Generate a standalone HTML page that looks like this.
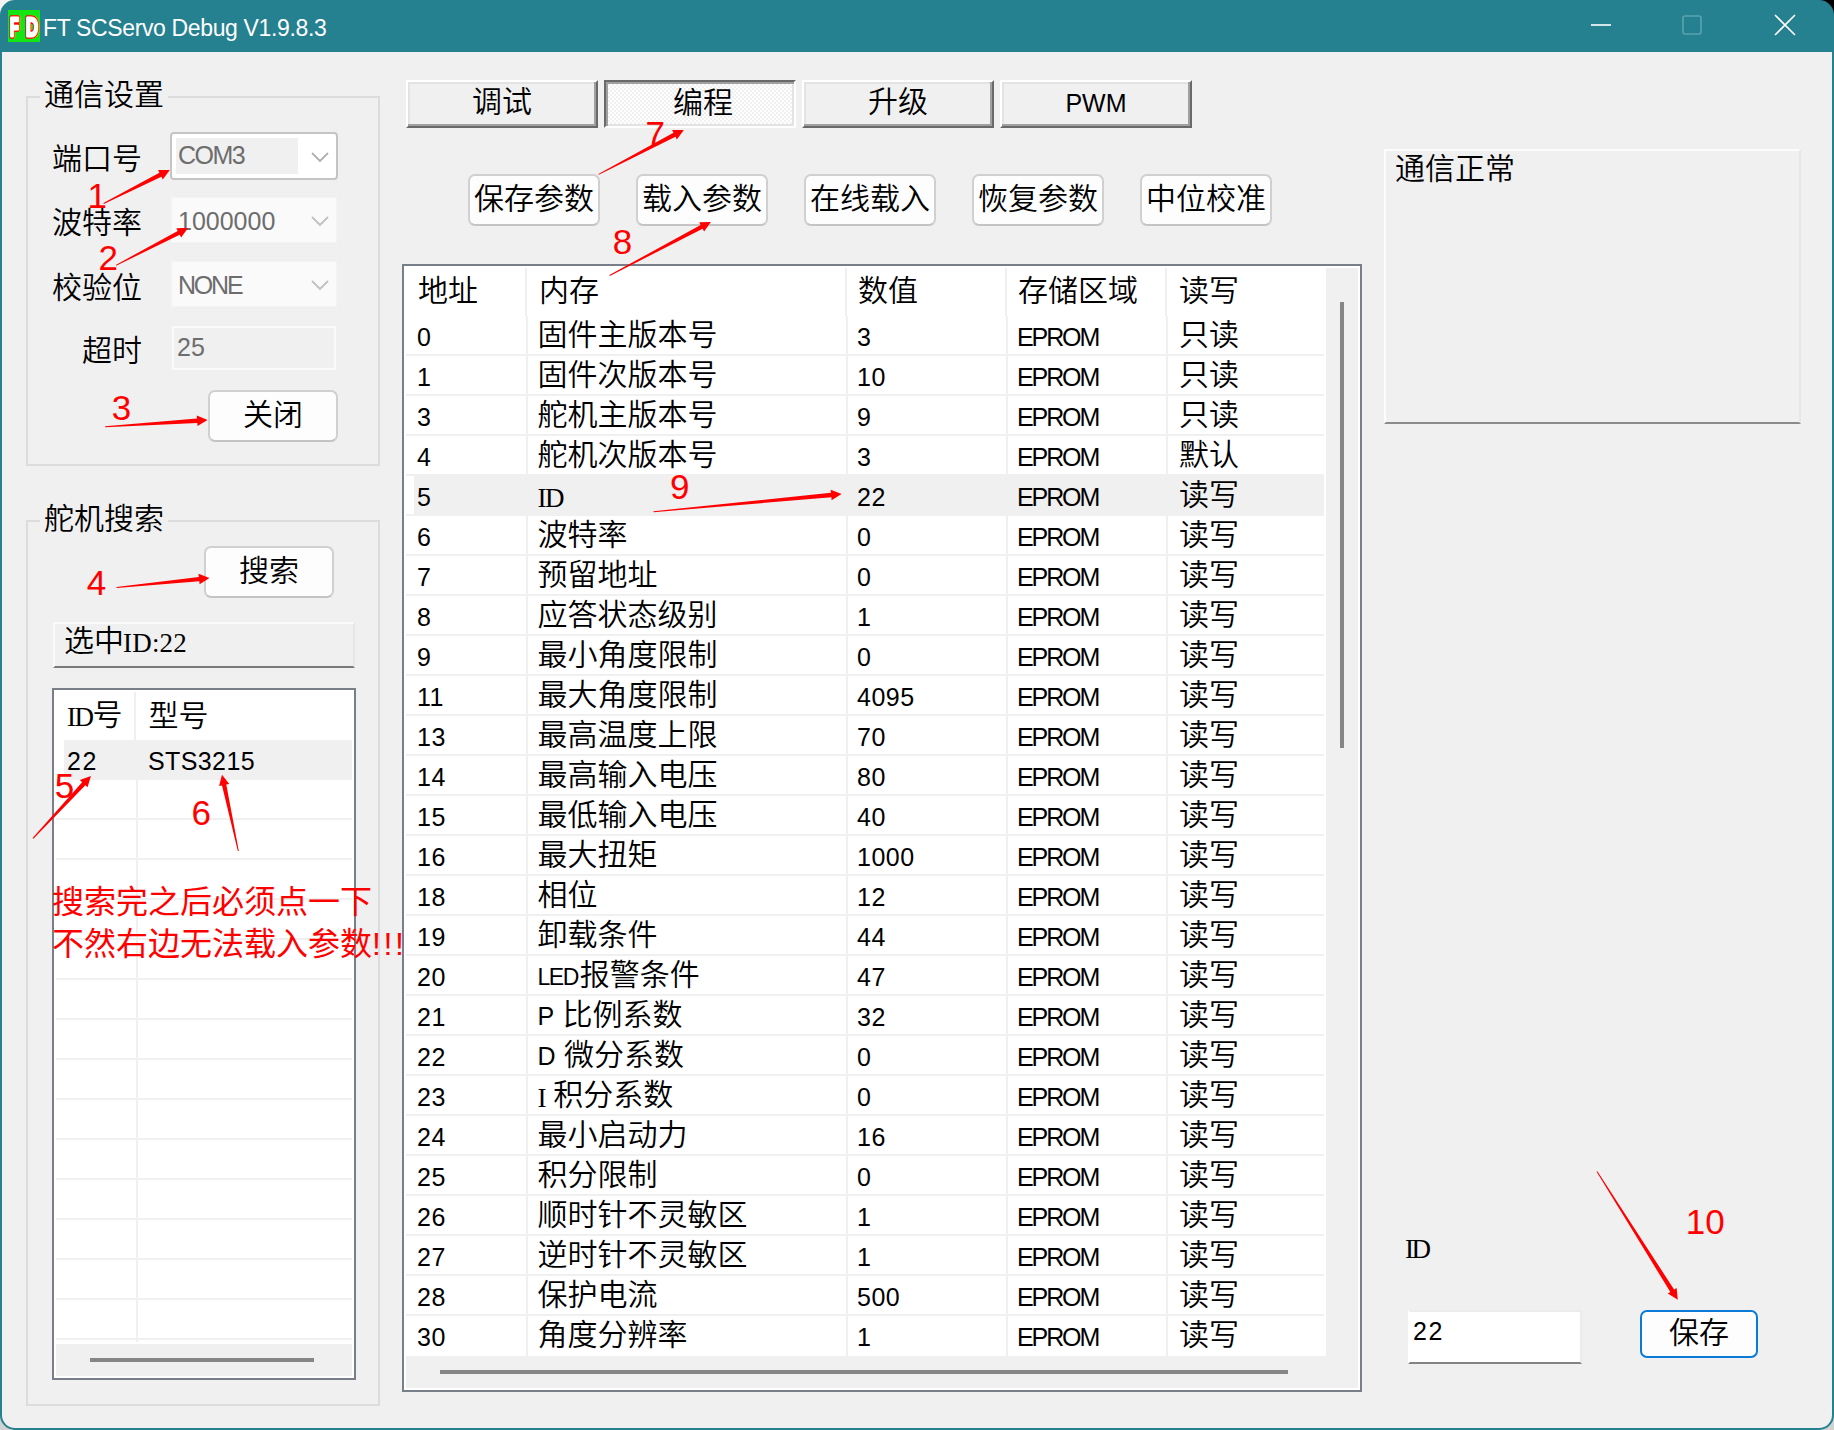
<!DOCTYPE html>
<html lang="zh-CN"><head><meta charset="utf-8"><title>FT SCServo Debug V1.9.8.3</title>
<style>
*{box-sizing:border-box;margin:0;padding:0}
html,body{width:1834px;height:1430px;overflow:hidden}
body{position:relative;background:#d2d2d2;font-family:"Liberation Sans","Noto Sans CJK SC",sans-serif;color:#000}
.abs,.abs>*{position:absolute}
.cj{font-family:"Liberation Sans","Noto Sans CJK SC",sans-serif;font-weight:350;font-size:30px;line-height:40px;white-space:nowrap}
.la{font-family:"Liberation Sans",sans-serif;font-weight:400;font-size:25px;white-space:nowrap}
.lc{font-family:"Liberation Sans",sans-serif;font-weight:400;font-size:25px;white-space:nowrap;color:#6d6d6d;line-height:28px}
.sf{font-family:"Liberation Serif",serif;font-weight:400;font-size:27px;letter-spacing:-1.5px}
.cj .sf{position:relative;top:1.5px}
.corner-tl{left:0;top:0;width:16px;height:16px;background:#f3f3f3}
.corner-tr{right:0;top:0;width:16px;height:16px;background:#000}
.win{left:0;top:0;width:1834px;height:1430px;background:#25808f;border-radius:15px}
.client{left:2px;top:52px;width:1830px;height:1376px;background:#f0f0f0;border-radius:0 0 13px 13px}
.title{left:43px;top:13px;font-size:23px;letter-spacing:-0.36px;line-height:30px;color:#fff;white-space:nowrap}
.icon{left:8px;top:10px;width:32px;height:32px;background:#14e614;overflow:hidden}
.grp{border:2px solid #dcdcdc}
.grpt{background:#f0f0f0;padding:0 4px 0 4px}
.btn{background:#fdfdfd;border:2px solid #d0d0d0;border-bottom-color:#c4c4c4;border-radius:7px;text-align:center}
.tab{background:#f0f0f0;text-align:center;border:2px solid;border-color:#fff #696969 #696969 #fff;box-shadow:inset -2px -2px 0 #a0a0a0,inset 2px 2px 0 #e3e3e3}
.tab.sel{background:repeating-conic-gradient(#ffffff 0 25%,#f0f0f0 0 50%) 0 0/4px 4px;border-color:#696969 #fff #fff #696969;box-shadow:inset 2px 2px 0 #a0a0a0,inset -2px -2px 0 #e3e3e3}
.lv{background:#fff;border:2px solid #787e8a}
.gl{background:#f0f0f0}
.red{color:#ff0000}
.num{font-family:"Liberation Sans",sans-serif;font-size:35px;line-height:35px;color:#ff0000;white-space:nowrap}
</style></head><body class="abs">
<div class="corner-tl"></div><div class="corner-tr"></div>
<div class="win"></div>
<div class="client"></div>
<div class="icon"><svg width="32" height="32" viewBox="0 0 32 32" style="position:absolute;left:0;top:0" font-family="Liberation Sans,sans-serif" font-weight="700" font-size="26.2"><g transform="translate(1.9,25.5) scale(0.56,1)"><text x="0" y="0" fill="#f00" stroke="#f00" stroke-width="4.6" stroke-linejoin="round" vector-effect="non-scaling-stroke">F</text><text x="0" y="0" fill="#fff" stroke="#fff" stroke-width="2.4" stroke-linejoin="round" vector-effect="non-scaling-stroke">F</text></g><g transform="translate(18.1,25.5) scale(0.64,1)"><text x="0" y="0" fill="#f00" stroke="#f00" stroke-width="4.6" stroke-linejoin="round" vector-effect="non-scaling-stroke">D</text><text x="0" y="0" fill="#fff" stroke="#fff" stroke-width="2.4" stroke-linejoin="round" vector-effect="non-scaling-stroke">D</text></g></svg></div>
<div class="title">FT SCServo Debug V1.9.8.3</div>
<svg class="wc" style="left:1580px;top:0" width="254" height="52" viewBox="1580 0 254 52" fill="none" stroke="#fff" stroke-width="1.6"><path d="M1591 25H1611"/><rect x="1683" y="16" width="18" height="18" rx="2" stroke="#5ba3b0"/><path d="M1775 15L1795 35M1795 15L1775 35"/></svg>

<div class="grp" style="left:26px;top:96px;width:354px;height:370px"></div>
<div class="cj grpt" style="left:40px;top:75px">通信设置</div>
<div class="cj" style="left:52px;top:139px">端口号</div>
<div class="cj" style="left:52px;top:203px">波特率</div>
<div class="cj" style="left:52px;top:268px">校验位</div>
<div class="cj" style="left:82px;top:331px">超时</div>
<div style="left:170px;top:132px;width:168px;height:48px;background:#fff;border:2px solid #c4c4c4;border-radius:4px"></div>
<div style="left:176px;top:138px;width:122px;height:36px;background:#f0f0f0"></div>
<div class="lc" style="left:178px;top:141px;letter-spacing:-1.5px">COM3</div>
<svg style="left:311px;top:152px" width="18" height="11" viewBox="0 0 18 11" fill="none" stroke="#b0b0b0" stroke-width="1.8"><path d="M1 1L9 9L17 1"/></svg>
<div style="left:171px;top:197px;width:166px;height:46px;background:#fafafa;border:1px solid #f4f4f4"></div>
<div class="lc" style="left:178px;top:207px">1000000</div>
<svg style="left:311px;top:216px" width="18" height="11" viewBox="0 0 18 11" fill="none" stroke="#c0c0c0" stroke-width="1.8"><path d="M1 1L9 9L17 1"/></svg>
<div style="left:171px;top:261px;width:166px;height:46px;background:#fafafa;border:1px solid #f4f4f4"></div>
<div class="lc" style="left:178px;top:271px;letter-spacing:-2.2px">NONE</div>
<svg style="left:311px;top:280px" width="18" height="11" viewBox="0 0 18 11" fill="none" stroke="#c0c0c0" stroke-width="1.8"><path d="M1 1L9 9L17 1"/></svg>
<div style="left:172px;top:326px;width:164px;height:44px;background:#f0f0f0;border:2px solid #fafafa"></div>
<div class="lc" style="left:177px;top:333px">25</div>
<div class="btn cj" style="left:208px;top:390px;width:130px;height:52px;line-height:45px">关闭</div>
<div class="grp" style="left:26px;top:520px;width:354px;height:886px"></div>
<div class="cj grpt" style="left:40px;top:499px">舵机搜索</div>
<div class="btn cj" style="left:204px;top:546px;width:130px;height:52px;line-height:45px">搜索</div>
<div style="left:53px;top:622px;width:302px;height:46px;border:2px solid;border-color:#fafafa #e6e6e6 #7a7a7a #fafafa"><div class="cj" style="position:absolute;left:9px;top:-3px">选中<span class="sf" style="letter-spacing:0.2px;position:relative;top:1px;left:-1px">ID:22</span></div></div>
<div class="lv" style="left:52px;top:688px;width:304px;height:692px"></div>
<div class="gl" style="left:134px;top:692px;width:2px;height:48px"></div>
<div class="gl" style="left:64px;top:740px;width:288px;height:40px"></div>

<div class="gl" style="left:56px;top:818px;width:296px;height:2px"></div>
<div class="gl" style="left:56px;top:858px;width:296px;height:2px"></div>
<div class="gl" style="left:56px;top:898px;width:296px;height:2px"></div>
<div class="gl" style="left:56px;top:938px;width:296px;height:2px"></div>
<div class="gl" style="left:56px;top:978px;width:296px;height:2px"></div>
<div class="gl" style="left:56px;top:1018px;width:296px;height:2px"></div>
<div class="gl" style="left:56px;top:1058px;width:296px;height:2px"></div>
<div class="gl" style="left:56px;top:1098px;width:296px;height:2px"></div>
<div class="gl" style="left:56px;top:1138px;width:296px;height:2px"></div>
<div class="gl" style="left:56px;top:1178px;width:296px;height:2px"></div>
<div class="gl" style="left:56px;top:1218px;width:296px;height:2px"></div>
<div class="gl" style="left:56px;top:1258px;width:296px;height:2px"></div>
<div class="gl" style="left:56px;top:1298px;width:296px;height:2px"></div>
<div class="gl" style="left:56px;top:1338px;width:296px;height:2px"></div>
<div class="gl" style="left:136px;top:780px;width:2px;height:562px"></div>
<div class="gl" style="left:56px;top:1344px;width:296px;height:32px"></div>
<div style="left:90px;top:1358px;width:224px;height:4px;background:#868686"></div>
<div class="cj" style="left:67px;top:695px"><span class="sf" style="position:relative;top:1px">ID</span>号</div>
<div class="cj" style="left:148.5px;top:696px">型号</div>
<div class="la" style="left:67px;top:746px;line-height:30px;letter-spacing:1.5px">22</div>
<div class="la" style="left:148px;top:746px;line-height:30px;letter-spacing:0.4px">STS3215</div>
<div class="red" style="left:52px;top:882px;font-size:32px;line-height:41.6px;white-space:nowrap;font-family:'Liberation Sans','Noto Sans CJK SC',sans-serif">搜索完之后必须点一下<br>不然右边无法载入参数<span style="letter-spacing:2.6px">!!!</span></div>
<div class="tab cj" style="left:406px;top:80px;width:192px;height:48px;line-height:39px">调试</div>
<div class="tab cj sel" style="left:604px;top:80px;width:192px;height:48px;line-height:42px;padding-left:6px">编程</div>
<div class="tab cj" style="left:802px;top:80px;width:192px;height:48px;line-height:39px">升级</div>
<div class="tab cj" style="left:1000px;top:80px;width:192px;height:48px;line-height:39px"><span class="la">PWM</span></div>
<div class="btn cj" style="left:468px;top:174px;width:132px;height:52px;line-height:45px">保存参数</div>
<div class="btn cj" style="left:636px;top:174px;width:132px;height:52px;line-height:45px">载入参数</div>
<div class="btn cj" style="left:804px;top:174px;width:132px;height:52px;line-height:45px">在线载入</div>
<div class="btn cj" style="left:972px;top:174px;width:132px;height:52px;line-height:45px">恢复参数</div>
<div class="btn cj" style="left:1140px;top:174px;width:132px;height:52px;line-height:45px">中位校准</div>
<div class="lv" style="left:402px;top:264px;width:960px;height:1128px"></div>
<div class="gl" style="left:525px;top:268px;width:2px;height:48px"></div>
<div class="gl" style="left:845px;top:268px;width:2px;height:48px"></div>
<div class="gl" style="left:1005px;top:268px;width:2px;height:48px"></div>
<div class="gl" style="left:1165px;top:268px;width:2px;height:48px"></div>
<div class="gl" style="left:414px;top:474px;width:910px;height:42px"></div>
<div class="gl" style="left:406px;top:354px;width:918px;height:2px"></div>
<div class="gl" style="left:406px;top:394px;width:918px;height:2px"></div>
<div class="gl" style="left:406px;top:434px;width:918px;height:2px"></div>
<div class="gl" style="left:406px;top:474px;width:918px;height:2px"></div>
<div class="gl" style="left:406px;top:514px;width:918px;height:2px"></div>
<div class="gl" style="left:406px;top:554px;width:918px;height:2px"></div>
<div class="gl" style="left:406px;top:594px;width:918px;height:2px"></div>
<div class="gl" style="left:406px;top:634px;width:918px;height:2px"></div>
<div class="gl" style="left:406px;top:674px;width:918px;height:2px"></div>
<div class="gl" style="left:406px;top:714px;width:918px;height:2px"></div>
<div class="gl" style="left:406px;top:754px;width:918px;height:2px"></div>
<div class="gl" style="left:406px;top:794px;width:918px;height:2px"></div>
<div class="gl" style="left:406px;top:834px;width:918px;height:2px"></div>
<div class="gl" style="left:406px;top:874px;width:918px;height:2px"></div>
<div class="gl" style="left:406px;top:914px;width:918px;height:2px"></div>
<div class="gl" style="left:406px;top:954px;width:918px;height:2px"></div>
<div class="gl" style="left:406px;top:994px;width:918px;height:2px"></div>
<div class="gl" style="left:406px;top:1034px;width:918px;height:2px"></div>
<div class="gl" style="left:406px;top:1074px;width:918px;height:2px"></div>
<div class="gl" style="left:406px;top:1114px;width:918px;height:2px"></div>
<div class="gl" style="left:406px;top:1154px;width:918px;height:2px"></div>
<div class="gl" style="left:406px;top:1194px;width:918px;height:2px"></div>
<div class="gl" style="left:406px;top:1234px;width:918px;height:2px"></div>
<div class="gl" style="left:406px;top:1274px;width:918px;height:2px"></div>
<div class="gl" style="left:406px;top:1314px;width:918px;height:2px"></div>
<div class="gl" style="left:526px;top:316px;width:2px;height:1040px"></div>
<div class="gl" style="left:846px;top:316px;width:2px;height:1040px"></div>
<div class="gl" style="left:1006px;top:316px;width:2px;height:1040px"></div>
<div class="gl" style="left:1166px;top:316px;width:2px;height:1040px"></div>
<div class="gl" style="left:1326px;top:268px;width:32px;height:1120px"></div>
<div class="gl" style="left:406px;top:1356px;width:952px;height:32px"></div>
<div style="left:1340px;top:302px;width:4px;height:446px;background:#868686"></div>
<div style="left:440px;top:1370px;width:848px;height:4px;background:#868686"></div>
<div class="cj" style="left:418px;top:271px">地址</div>
<div class="cj" style="left:539px;top:271px">内存</div>
<div class="cj" style="left:858px;top:271px">数值</div>
<div class="cj" style="left:1018px;top:271px">存储区域</div>
<div class="cj" style="left:1179px;top:271px">读写</div>
<div class="la" style="left:417px;top:317px;line-height:40px;letter-spacing:0.5px">0</div>
<div class="cj" style="left:537.5px;top:315px">固件主版本号</div>
<div class="la" style="left:857px;top:317px;line-height:40px;letter-spacing:0.5px">3</div>
<div class="la" style="left:1017px;top:317px;line-height:40px;letter-spacing:-2.1px">EPROM</div>
<div class="cj" style="left:1179px;top:315px">只读</div>
<div class="la" style="left:417px;top:357px;line-height:40px;letter-spacing:0.5px">1</div>
<div class="cj" style="left:537.5px;top:355px">固件次版本号</div>
<div class="la" style="left:857px;top:357px;line-height:40px;letter-spacing:0.5px">10</div>
<div class="la" style="left:1017px;top:357px;line-height:40px;letter-spacing:-2.1px">EPROM</div>
<div class="cj" style="left:1179px;top:355px">只读</div>
<div class="la" style="left:417px;top:397px;line-height:40px;letter-spacing:0.5px">3</div>
<div class="cj" style="left:537.5px;top:395px">舵机主版本号</div>
<div class="la" style="left:857px;top:397px;line-height:40px;letter-spacing:0.5px">9</div>
<div class="la" style="left:1017px;top:397px;line-height:40px;letter-spacing:-2.1px">EPROM</div>
<div class="cj" style="left:1179px;top:395px">只读</div>
<div class="la" style="left:417px;top:437px;line-height:40px;letter-spacing:0.5px">4</div>
<div class="cj" style="left:537.5px;top:435px">舵机次版本号</div>
<div class="la" style="left:857px;top:437px;line-height:40px;letter-spacing:0.5px">3</div>
<div class="la" style="left:1017px;top:437px;line-height:40px;letter-spacing:-2.1px">EPROM</div>
<div class="cj" style="left:1179px;top:435px">默认</div>
<div class="la" style="left:417px;top:477px;line-height:40px;letter-spacing:0.5px">5</div>
<div class="cj" style="left:537.5px;top:475px"><span class="sf">ID</span></div>
<div class="la" style="left:857px;top:477px;line-height:40px;letter-spacing:0.5px">22</div>
<div class="la" style="left:1017px;top:477px;line-height:40px;letter-spacing:-2.1px">EPROM</div>
<div class="cj" style="left:1179px;top:475px">读写</div>
<div class="la" style="left:417px;top:517px;line-height:40px;letter-spacing:0.5px">6</div>
<div class="cj" style="left:537.5px;top:515px">波特率</div>
<div class="la" style="left:857px;top:517px;line-height:40px;letter-spacing:0.5px">0</div>
<div class="la" style="left:1017px;top:517px;line-height:40px;letter-spacing:-2.1px">EPROM</div>
<div class="cj" style="left:1179px;top:515px">读写</div>
<div class="la" style="left:417px;top:557px;line-height:40px;letter-spacing:0.5px">7</div>
<div class="cj" style="left:537.5px;top:555px">预留地址</div>
<div class="la" style="left:857px;top:557px;line-height:40px;letter-spacing:0.5px">0</div>
<div class="la" style="left:1017px;top:557px;line-height:40px;letter-spacing:-2.1px">EPROM</div>
<div class="cj" style="left:1179px;top:555px">读写</div>
<div class="la" style="left:417px;top:597px;line-height:40px;letter-spacing:0.5px">8</div>
<div class="cj" style="left:537.5px;top:595px">应答状态级别</div>
<div class="la" style="left:857px;top:597px;line-height:40px;letter-spacing:0.5px">1</div>
<div class="la" style="left:1017px;top:597px;line-height:40px;letter-spacing:-2.1px">EPROM</div>
<div class="cj" style="left:1179px;top:595px">读写</div>
<div class="la" style="left:417px;top:637px;line-height:40px;letter-spacing:0.5px">9</div>
<div class="cj" style="left:537.5px;top:635px">最小角度限制</div>
<div class="la" style="left:857px;top:637px;line-height:40px;letter-spacing:0.5px">0</div>
<div class="la" style="left:1017px;top:637px;line-height:40px;letter-spacing:-2.1px">EPROM</div>
<div class="cj" style="left:1179px;top:635px">读写</div>
<div class="la" style="left:417px;top:677px;line-height:40px;letter-spacing:0.5px">11</div>
<div class="cj" style="left:537.5px;top:675px">最大角度限制</div>
<div class="la" style="left:857px;top:677px;line-height:40px;letter-spacing:0.5px">4095</div>
<div class="la" style="left:1017px;top:677px;line-height:40px;letter-spacing:-2.1px">EPROM</div>
<div class="cj" style="left:1179px;top:675px">读写</div>
<div class="la" style="left:417px;top:717px;line-height:40px;letter-spacing:0.5px">13</div>
<div class="cj" style="left:537.5px;top:715px">最高温度上限</div>
<div class="la" style="left:857px;top:717px;line-height:40px;letter-spacing:0.5px">70</div>
<div class="la" style="left:1017px;top:717px;line-height:40px;letter-spacing:-2.1px">EPROM</div>
<div class="cj" style="left:1179px;top:715px">读写</div>
<div class="la" style="left:417px;top:757px;line-height:40px;letter-spacing:0.5px">14</div>
<div class="cj" style="left:537.5px;top:755px">最高输入电压</div>
<div class="la" style="left:857px;top:757px;line-height:40px;letter-spacing:0.5px">80</div>
<div class="la" style="left:1017px;top:757px;line-height:40px;letter-spacing:-2.1px">EPROM</div>
<div class="cj" style="left:1179px;top:755px">读写</div>
<div class="la" style="left:417px;top:797px;line-height:40px;letter-spacing:0.5px">15</div>
<div class="cj" style="left:537.5px;top:795px">最低输入电压</div>
<div class="la" style="left:857px;top:797px;line-height:40px;letter-spacing:0.5px">40</div>
<div class="la" style="left:1017px;top:797px;line-height:40px;letter-spacing:-2.1px">EPROM</div>
<div class="cj" style="left:1179px;top:795px">读写</div>
<div class="la" style="left:417px;top:837px;line-height:40px;letter-spacing:0.5px">16</div>
<div class="cj" style="left:537.5px;top:835px">最大扭矩</div>
<div class="la" style="left:857px;top:837px;line-height:40px;letter-spacing:0.5px">1000</div>
<div class="la" style="left:1017px;top:837px;line-height:40px;letter-spacing:-2.1px">EPROM</div>
<div class="cj" style="left:1179px;top:835px">读写</div>
<div class="la" style="left:417px;top:877px;line-height:40px;letter-spacing:0.5px">18</div>
<div class="cj" style="left:537.5px;top:875px">相位</div>
<div class="la" style="left:857px;top:877px;line-height:40px;letter-spacing:0.5px">12</div>
<div class="la" style="left:1017px;top:877px;line-height:40px;letter-spacing:-2.1px">EPROM</div>
<div class="cj" style="left:1179px;top:875px">读写</div>
<div class="la" style="left:417px;top:917px;line-height:40px;letter-spacing:0.5px">19</div>
<div class="cj" style="left:537.5px;top:915px">卸载条件</div>
<div class="la" style="left:857px;top:917px;line-height:40px;letter-spacing:0.5px">44</div>
<div class="la" style="left:1017px;top:917px;line-height:40px;letter-spacing:-2.1px">EPROM</div>
<div class="cj" style="left:1179px;top:915px">读写</div>
<div class="la" style="left:417px;top:957px;line-height:40px;letter-spacing:0.5px">20</div>
<div class="cj" style="left:537.5px;top:955px"><span class="la" style="font-size:23px;letter-spacing:-1.5px;margin-right:2px">LED</span>报警条件</div>
<div class="la" style="left:857px;top:957px;line-height:40px;letter-spacing:0.5px">47</div>
<div class="la" style="left:1017px;top:957px;line-height:40px;letter-spacing:-2.1px">EPROM</div>
<div class="cj" style="left:1179px;top:955px">读写</div>
<div class="la" style="left:417px;top:997px;line-height:40px;letter-spacing:0.5px">21</div>
<div class="cj" style="left:537.5px;top:995px"><span class="la">P</span> 比例系数</div>
<div class="la" style="left:857px;top:997px;line-height:40px;letter-spacing:0.5px">32</div>
<div class="la" style="left:1017px;top:997px;line-height:40px;letter-spacing:-2.1px">EPROM</div>
<div class="cj" style="left:1179px;top:995px">读写</div>
<div class="la" style="left:417px;top:1037px;line-height:40px;letter-spacing:0.5px">22</div>
<div class="cj" style="left:537.5px;top:1035px"><span class="la">D</span> 微分系数</div>
<div class="la" style="left:857px;top:1037px;line-height:40px;letter-spacing:0.5px">0</div>
<div class="la" style="left:1017px;top:1037px;line-height:40px;letter-spacing:-2.1px">EPROM</div>
<div class="cj" style="left:1179px;top:1035px">读写</div>
<div class="la" style="left:417px;top:1077px;line-height:40px;letter-spacing:0.5px">23</div>
<div class="cj" style="left:537.5px;top:1075px"><span class="sf">I</span> 积分系数</div>
<div class="la" style="left:857px;top:1077px;line-height:40px;letter-spacing:0.5px">0</div>
<div class="la" style="left:1017px;top:1077px;line-height:40px;letter-spacing:-2.1px">EPROM</div>
<div class="cj" style="left:1179px;top:1075px">读写</div>
<div class="la" style="left:417px;top:1117px;line-height:40px;letter-spacing:0.5px">24</div>
<div class="cj" style="left:537.5px;top:1115px">最小启动力</div>
<div class="la" style="left:857px;top:1117px;line-height:40px;letter-spacing:0.5px">16</div>
<div class="la" style="left:1017px;top:1117px;line-height:40px;letter-spacing:-2.1px">EPROM</div>
<div class="cj" style="left:1179px;top:1115px">读写</div>
<div class="la" style="left:417px;top:1157px;line-height:40px;letter-spacing:0.5px">25</div>
<div class="cj" style="left:537.5px;top:1155px">积分限制</div>
<div class="la" style="left:857px;top:1157px;line-height:40px;letter-spacing:0.5px">0</div>
<div class="la" style="left:1017px;top:1157px;line-height:40px;letter-spacing:-2.1px">EPROM</div>
<div class="cj" style="left:1179px;top:1155px">读写</div>
<div class="la" style="left:417px;top:1197px;line-height:40px;letter-spacing:0.5px">26</div>
<div class="cj" style="left:537.5px;top:1195px">顺时针不灵敏区</div>
<div class="la" style="left:857px;top:1197px;line-height:40px;letter-spacing:0.5px">1</div>
<div class="la" style="left:1017px;top:1197px;line-height:40px;letter-spacing:-2.1px">EPROM</div>
<div class="cj" style="left:1179px;top:1195px">读写</div>
<div class="la" style="left:417px;top:1237px;line-height:40px;letter-spacing:0.5px">27</div>
<div class="cj" style="left:537.5px;top:1235px">逆时针不灵敏区</div>
<div class="la" style="left:857px;top:1237px;line-height:40px;letter-spacing:0.5px">1</div>
<div class="la" style="left:1017px;top:1237px;line-height:40px;letter-spacing:-2.1px">EPROM</div>
<div class="cj" style="left:1179px;top:1235px">读写</div>
<div class="la" style="left:417px;top:1277px;line-height:40px;letter-spacing:0.5px">28</div>
<div class="cj" style="left:537.5px;top:1275px">保护电流</div>
<div class="la" style="left:857px;top:1277px;line-height:40px;letter-spacing:0.5px">500</div>
<div class="la" style="left:1017px;top:1277px;line-height:40px;letter-spacing:-2.1px">EPROM</div>
<div class="cj" style="left:1179px;top:1275px">读写</div>
<div class="la" style="left:417px;top:1317px;line-height:40px;letter-spacing:0.5px">30</div>
<div class="cj" style="left:537.5px;top:1315px">角度分辨率</div>
<div class="la" style="left:857px;top:1317px;line-height:40px;letter-spacing:0.5px">1</div>
<div class="la" style="left:1017px;top:1317px;line-height:40px;letter-spacing:-2.1px">EPROM</div>
<div class="cj" style="left:1179px;top:1315px">读写</div>
<div style="left:1384px;top:149px;width:417px;height:275px;border:2px solid;border-color:#fcfcfc #e6e6e6 #8a8a8a #fcfcfc"></div>
<div class="cj" style="left:1395px;top:149px">通信正常</div>
<div class="sf" style="left:1405px;top:1234px;line-height:30px;letter-spacing:-2.5px">ID</div>
<div style="left:1408px;top:1310px;width:174px;height:54px;background:#fff;border:2px solid #ececec;border-left-color:#fff;border-bottom:2px solid #838383"></div>
<div class="la" style="left:1413px;top:1316px;line-height:30px;letter-spacing:1.5px">22</div>
<div class="btn cj" style="left:1640px;top:1310px;width:118px;height:48px;line-height:42px;border-color:#0a7ad6">保存</div>
<svg style="left:0;top:0" width="1834" height="1430" viewBox="0 0 1834 1430" fill="#ff0000">
<polygon points="103.8,203.9 161.4,176.7 162.8,179.4 169.8,170.0 158.1,170.1 159.4,172.8 103.4,203.1"/>
<polygon points="116.2,265.7 179.7,234.8 181.1,237.5 188.0,228.0 176.3,228.2 177.7,230.9 115.8,264.9"/>
<polygon points="105.1,427.2 197.3,422.9 197.5,425.9 207.6,420.0 196.8,415.4 197.0,418.5 105.1,426.2"/>
<polygon points="116.6,588.0 199.3,581.3 199.6,584.3 209.5,578.0 198.5,573.8 198.8,576.9 116.4,587.0"/>
<polygon points="33.4,838.7 85.4,785.2 87.6,787.3 90.9,776.0 79.9,780.1 82.1,782.2 32.6,838.1"/>
<polygon points="238.8,850.9 226.3,784.5 229.3,783.9 222.0,774.7 219.1,786.1 222.0,785.4 237.8,851.1"/>
<polygon points="598.8,174.8 675.5,136.7 676.9,139.4 683.8,129.9 672.1,130.1 673.5,132.8 598.4,174.0"/>
<polygon points="609.8,275.9 702.6,228.8 704.1,231.5 710.9,222.0 699.2,222.3 700.6,225.0 609.4,275.1"/>
<polygon points="653.5,512.2 831.4,497.2 831.6,500.2 841.6,494.0 830.7,489.8 830.9,492.8 653.5,511.2"/>
<polygon points="1596.6,1171.8 1670.3,1292.0 1667.8,1293.6 1677.8,1299.7 1676.6,1288.0 1674.1,1289.6 1597.4,1171.2"/>
</svg>
<div class="num" style="left:87.4px;top:178.2px">1</div>
<div class="num" style="left:98.6px;top:240.0px">2</div>
<div class="num" style="left:111.7px;top:389.9px">3</div>
<div class="num" style="left:86.8px;top:565.2px">4</div>
<div class="num" style="left:54.8px;top:767.5px">5</div>
<div class="num" style="left:191.5px;top:794.5px">6</div>
<div class="num" style="left:645.5px;top:116.2px">7</div>
<div class="num" style="left:612.8px;top:223.7px">8</div>
<div class="num" style="left:670.1px;top:469.2px">9</div>
<div class="num" style="left:1685.8px;top:1204.2px">10</div>
</body></html>
